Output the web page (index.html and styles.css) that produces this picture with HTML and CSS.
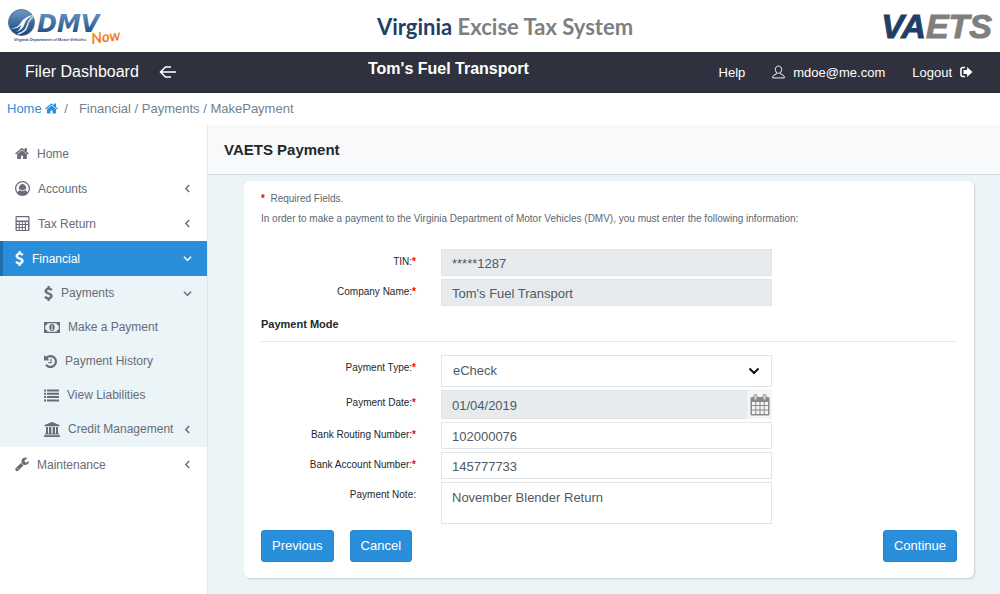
FILE: index.html
```html
<!DOCTYPE html>
<html lang="en">
<head>
    <meta charset="UTF-8">
    <meta name="viewport" content="width=device-width, initial-scale=1.0">
    <title>VAETS Payment</title>
    <link rel="stylesheet" href="styles.css">
</head>
<body>
    <!-- icon shapes, used below with <use> -->
    <svg class="sprite" aria-hidden="true">
        <symbol id="i-home" viewBox="64 64 1664 1664"><path d="M1472 992v480q0 26-19 45t-45 19h-384v-384h-256v384h-384q-26 0-45-19t-19-45v-480q0-1 .5-3t.5-3l575-474 575 474q1 2 1 6zm223-69l-62 74q-8 9-21 11h-3q-13 0-21-7l-692-577-692 577q-12 8-24 7-13-2-21-11l-62-74q-8-10-7-23.5t11-21.5l719-599q32-26 76-26t76 26l244 204v-195q0-14 9-23t23-9h192q14 0 23 9t9 23v408l219 182q10 8 11 21.5t-7 23.5z"/></symbol>
        <symbol id="i-dollar" viewBox="384 0 1024 1792"><path stroke="currentColor" stroke-width="50" d="M1362 1185q0 153-99.5 263.5t-258.5 136.5v175q0 14-9 23t-23 9h-135q-13 0-22.5-9.5t-9.5-22.5v-175q-66-9-127.5-31t-101.5-44.5-74-48-46.5-37.5-17.5-18q-17-21-2-41l103-135q7-10 23-12 15-2 24 9l2 2q113 99 243 125 37 8 74 8 81 0 142.5-43t61.5-122q0-28-15-53t-33.5-42-58.5-37.5-66-32-80-32.5q-39-16-61.5-25t-61.5-26.5-62.5-31-56.5-35.5-53.5-42.5-43.5-49-35.5-58-21-66.5-8.5-78q0-138 98-242t255-134v-180q0-13 9.5-22.5t22.5-9.5h135q14 0 23 9t9 23v176q57 6 110.5 23t87 33.5 63.5 37.5 39 29 15 14q17 18 5 38l-81 146q-8 15-23 16-14 3-27-7-3-3-14.5-12t-39-26.5-58.5-32-74.5-26-85.5-11.5q-95 0-155 43t-60 111q0 26 8.5 48t29.5 41.5 39.5 33 56 31 60.5 27 70 27.5q53 20 81 31.5t76 35 75.5 42.5 62 50 53 63.5 31.5 76.5 13 94z"/></symbol>
        <symbol id="i-history" viewBox="128 128 1536 1536"><path d="M1664 896q0 156-61 298t-164 245-245 164-298 61q-172 0-327-72.5t-264-204.5q-7-10-6.5-22.5t8.5-20.5l137-138q10-9 25-9 16 2 23 12 73 95 179 147t225 52q104 0 198.5-40.5t163.5-109.5 109.5-163.5 40.5-198.5-40.5-198.5-109.5-163.5-163.5-109.5-198.5-40.5q-98 0-188 35.5t-160 101.5l137 138q31 30 14 69-17 40-59 40h-448q-26 0-45-19t-19-45v-448q0-42 40-59 39-17 69 14l130 129q107-101 244.5-156.5t284.5-55.5q156 0 298 61t245 164 164 245 61 298zm-640-288v448q0 14-9 23t-23 9h-320q-14 0-23-9t-9-23v-64q0-14 9-23t23-9h224v-352q0-14 9-23t23-9h64q14 0 23 9t9 23z"/></symbol>
        <symbol id="i-wrench" viewBox="64 128 1664 1664"><path d="M448 1472q0-26-19-45t-45-19-45 19-19 45 19 45 45 19 45-19 19-45zm644-420l-682 682q-37 37-90 37-52 0-91-37l-106-108q-38-36-38-90 0-53 38-91l681-681q39 98 114.5 173.5t173.5 114.5zm634-435q0 39-23 106-47 134-164.5 217.5t-258.5 83.5q-185 0-316.5-131.5t-131.5-316.5 131.5-316.5 316.5-131.5q58 0 121.5 16.5t107.5 46.5q16 11 16 28t-16 28l-293 169v224l193 107q5-3 79-48.5t135.5-81 70.5-35.5q15 0 23.5 10t8.5 25z"/></symbol>
        <symbol id="i-account" viewBox="0 0 14 14"><path fill-rule="evenodd" d="M7 0a7 7 0 1 1 0 14A7 7 0 0 1 7 0zM7 1.200A5.800 5.800 0 0 0 2.500 10.600Q3 8.900 4.600 8.600A3.300 3.300 0 1 1 9.400 8.600Q11 8.900 11.500 10.600A5.800 5.800 0 0 0 7 1.200z"/><path d="M4.500 8.200q2.500 2 5 0" fill="none" stroke="#fff" stroke-width=".8"/></symbol>
        <symbol id="i-calc" viewBox="0 0 14 15"><path fill-rule="evenodd" d="M1 0h12q1 0 1 1v13q0 1-1 1h-12q-1 0-1-1v-13q0-1 1-1zM1.200 1.200v3.200h11.600v-3.200zM1.300 6h2v2h-2zM4.300 6h2v2h-2zM7.300 6h2v2h-2zM10.500 6h2v2h-2zM1.300 9h2v2h-2zM4.300 9h2v2h-2zM7.300 9h2v2h-2zM1.300 12h2v2h-2zM4.300 12h2v2h-2zM7.300 12h2v2h-2zM10.500 9h2v5h-2z"/></symbol>
        <symbol id="i-money" viewBox="0 0 16 11"><path fill-rule="evenodd" d="M0 0h16v11h-16zM3.500 1.200a2.300 2.300 0 0 1-2.300 2.300v4a2.300 2.300 0 0 1 2.300 2.300h9a2.300 2.300 0 0 1 2.300-2.300v-4a2.300 2.300 0 0 1-2.300-2.300z"/><ellipse cx="8" cy="5.500" rx="2.700" ry="3.400"/><path d="M7 4.200l1-.8v4M6.800 7.500h2.400" fill="none" stroke="#ebf4f7" stroke-width=".8"/></symbol>
        <symbol id="i-list" viewBox="0 0 15 12"><path d="M0 0h2v2H0zM3 0h12v2H3zM0 3.300h2v2H0zM3 3.300h12v2H3zM0 6.600h2v2H0zM3 6.600h12v2H3zM0 10h2v2H0zM3 10h12v2H3z"/></symbol>
        <symbol id="i-bank" viewBox="0 0 16 15"><path d="M8 0l7.500 3v1.200H.5V3zM2 5h2v6.500h1V5h2v6.500h2V5h2v6.500h1V5h2v6.500h1v1H1v-1h1zM7.700 5h.6v6.500h-.6zM0 13.200h16V15H0z"/></symbol>
        <symbol id="i-left" viewBox="0 0 8 8"><path d="M5.500 .8L2.500 4l3 3.200" fill="none" stroke="currentColor" stroke-width="1.300"/></symbol>
        <symbol id="i-down" viewBox="0 0 8 8"><path d="M.8 2.500L4 5.500l3.200-3" fill="none" stroke="currentColor" stroke-width="1.300"/></symbol>
        <symbol id="i-collapse" viewBox="0 0 18 14"><path d="M1 7h16M12 2H6.500L1.500 7l5 5H12" fill="none" stroke="currentColor" stroke-width="1.500"/></symbol>
        <symbol id="i-user" viewBox="0 0 14 14"><path d="M7 .6c2 0 3.400 1.500 3.400 3.600S9 8.400 7 8.400 3.600 6.300 3.600 4.200 5 .6 7 .6zM4.700 7.500v1.600L1.500 10.800Q.8 11.500.7 13.400h12.600q-.1-1.900-.8-2.600L9.300 9.100V7.500" fill="none" stroke="currentColor"/></symbol>
        <symbol id="i-logout" viewBox="0 0 13 12"><path d="M5 1.500H3Q1 1.500 1 3.500v5q0 2 2 2h2" fill="none" stroke="currentColor" stroke-width="1.600"/><path d="M7 1l5.500 5L7 11V8H3.500V4H7z"/></symbol>
        <symbol id="i-calendar" viewBox="0 0 20 22"><path fill-rule="evenodd" d="M2 3h16q1.500 0 1.500 1.500v15.500q0 1.500-1.500 1.500h-16q-1.500 0-1.500-1.500v-15.500q0-1.500 1.500-1.500zM2 8v3h3.300v-3zM6.300 8v3h3.200v-3zM10.500 8v3h3.200v-3zM14.700 8v3h3.300v-3zM2 12v3.500h3.300v-3.500zM6.300 12v3.500h3.200v-3.500zM10.500 12v3.500h3.200v-3.500zM14.700 12v3.500h3.300v-3.500zM2 16.500v3.500h3.300v-3.500zM6.300 16.500v3.500h3.200v-3.500zM10.500 16.500v3.500h3.200v-3.500zM14.700 16.500v3.500h3.300v-3.500z"/><rect x="4" y=".5" width="3" height="5.500" rx="1.500" fill="#ddd" stroke="currentColor"/><rect x="13" y=".5" width="3" height="5.500" rx="1.500" fill="#ddd" stroke="currentColor"/></symbol>
    </svg>

    <header class="banner">
        <svg class="dmv-logo" viewBox="0 0 114 40" role="img" aria-label="DMV Now">
            <defs>
                <linearGradient id="blue" x1="0" y1="0" x2="0" y2="1">
                    <stop offset="0" stop-color="#6f9cc8"/>
                    <stop offset="1" stop-color="#123f78"/>
                </linearGradient>
                <linearGradient id="orange" x1="0" y1="0" x2="0" y2="1">
                    <stop offset="0" stop-color="#f9b233"/>
                    <stop offset="1" stop-color="#e5601c"/>
                </linearGradient>
            </defs>
            <circle cx="13.500" cy="16.500" r="13" fill="url(#blue)" stroke="#5b6f8c"/>
            <path d="M2 22q7 1 11-5.500t13-7.500q-8 3-9.500 9T7 26.500q5-2 6.500-8Q9 24 2 22z" fill="#fff"/>
            <path d="M10 28q8-2 9.500-9 1-5 6-8.500" fill="none" stroke="#dfe6ee" stroke-width="1.500"/>
            <text x="29" y="26" class="dmv-name" fill="url(#blue)">DMV</text>
            <text x="6" y="35" class="dmv-tag">Virginia Department of Motor Vehicles</text>
            <text x="84" y="38" class="dmv-now" fill="url(#orange)" transform="rotate(-8 84 38)">Now</text>
        </svg>
        <div class="system-name"><span>Virginia</span> Excise Tax System</div>
        <div class="vaets-logo"><span>VA</span>ETS</div>
    </header>

    <nav class="topbar">
        <div class="topbar-left">
            <a href="#">Filer Dashboard</a>
            <button type="button" class="collapse" aria-label="Collapse menu"><svg><use href="#i-collapse"/></svg></button>
        </div>
        <div class="company">Tom's Fuel Transport</div>
        <div class="topbar-right">
            <a href="#">Help</a>
            <a href="#"><svg class="icon-user"><use href="#i-user"/></svg>mdoe@me.com</a>
            <a href="#">Logout<svg class="icon-logout"><use href="#i-logout"/></svg></a>
        </div>
    </nav>

    <div class="breadcrumb">
        <a href="#">Home <svg><use href="#i-home"/></svg></a>
        <span class="sep">/</span>
        <span>Financial / Payments / MakePayment</span>
    </div>

    <div class="layout">
        <aside class="sidebar">
            <a href="#"><svg class="w14"><use href="#i-home"/></svg>Home</a>
            <a href="#"><svg class="w15"><use href="#i-account"/></svg>Accounts<svg class="arrow"><use href="#i-left"/></svg></a>
            <a href="#"><svg class="w15"><use href="#i-calc"/></svg>Tax Return<svg class="arrow"><use href="#i-left"/></svg></a>
            <a href="#" class="active"><svg class="w9"><use href="#i-dollar"/></svg>Financial<svg class="arrow"><use href="#i-down"/></svg></a>
            <div class="submenu">
                <a href="#"><svg class="w9"><use href="#i-dollar"/></svg>Payments<svg class="arrow"><use href="#i-down"/></svg></a>
                <a href="#"><svg class="w16"><use href="#i-money"/></svg>Make a Payment</a>
                <a href="#"><svg class="w13"><use href="#i-history"/></svg>Payment History</a>
                <a href="#"><svg class="w15"><use href="#i-list"/></svg>View Liabilities</a>
                <a href="#"><svg class="w16"><use href="#i-bank"/></svg>Credit Management<svg class="arrow"><use href="#i-left"/></svg></a>
            </div>
            <a href="#"><svg class="w14"><use href="#i-wrench"/></svg>Maintenance<svg class="arrow"><use href="#i-left"/></svg></a>
        </aside>

        <main class="content">
            <h1>VAETS Payment</h1>
            <form class="card">
                <p><span class="req">*</span>&nbsp; Required Fields.</p>
                <p>In order to make a payment to the Virginia Department of Motor Vehicles (DMV), you must enter the following information:</p>

                <div class="fields">
                    <label for="tin">TIN:<span class="req">*</span></label>
                    <input type="text" id="tin" name="tin" value="*****1287" readonly>
                    <label for="company">Company Name:<span class="req">*</span></label>
                    <input type="text" id="company" name="company" value="Tom's Fuel Transport" readonly>
                </div>

                <h2>Payment Mode</h2>

                <div class="fields">
                    <label for="type">Payment Type:<span class="req">*</span></label>
                    <select id="type" name="type">
                        <option>eCheck</option>
                    </select>
                    <label for="date">Payment Date:<span class="req">*</span></label>
                    <div class="date">
                        <input type="text" id="date" name="date" value="01/04/2019" readonly>
                        <button type="button" aria-label="Pick a date"><svg><use href="#i-calendar"/></svg></button>
                    </div>
                    <label for="routing">Bank Routing Number:<span class="req">*</span></label>
                    <input type="text" id="routing" name="routing" value="102000076">
                    <label for="account">Bank Account Number:<span class="req">*</span></label>
                    <input type="text" id="account" name="account" value="145777733">
                    <label for="note">Payment Note:</label>
                    <textarea id="note" name="note">November Blender Return</textarea>
                </div>

                <div class="buttons">
                    <button type="button">Previous</button>
                    <button type="button">Cancel</button>
                    <button type="submit">Continue</button>
                </div>
            </form>
        </main>
    </div>
</body>
</html>
```
FILE: styles.css
```css
* {
    box-sizing: border-box;
}

body {
    margin: 0;
    min-height: 100vh;
    display: flex;
    flex-direction: column;
    font-family: "Liberation Sans", Arial, sans-serif;
    font-size: 13px;
    color: #23282c;
    background: #fff;
}

a {
    color: inherit;
    text-decoration: none;
}

svg {
    fill: currentColor;
}

.sprite {
    display: none;
}

/* banner */
.banner {
    display: grid;
    grid-template-columns: 1fr auto 1fr;
    align-items: center;
    height: 52px;
    padding: 0 8px;
}

.dmv-logo {
    width: 114px;
    height: 40px;
}

.dmv-name {
    font: italic bold 24px "DejaVu Sans", sans-serif;
}

.dmv-tag {
    font: italic bold 4px "Liberation Sans", sans-serif;
    fill: #1f4a80;
}

.dmv-now {
    font: italic bold 15px Lato, sans-serif;
}

.system-name {
    padding-left: 10px;
    font: bold 22px Lato, sans-serif;
    color: #7f7f7f;
}

.system-name span,
.vaets-logo span {
    color: #1f3f66;
}

.vaets-logo {
    justify-self: end;
    font-size: 34px;
    font-weight: bold;
    font-style: italic;
    color: #7f7f7f;
    -webkit-text-stroke: 1px;
}

/* dark bar */
.topbar {
    display: grid;
    grid-template-columns: minmax(0, 343px) auto 1fr;
    height: 41px;
    padding: 0 27px 0 25px;
    background: #2f323e;
    border-bottom: 1px solid #23282c;
    color: #fff;
}

.topbar-left,
.topbar-right {
    display: flex;
    align-items: center;
}

.topbar-left {
    font-size: 16px;
}

.collapse {
    margin-left: 20px;
    padding: 0;
    border: 0;
    background: none;
    color: #fff;
}

.collapse svg {
    display: block;
    width: 18px;
    height: 14px;
}

.company {
    padding-top: 8px;
    font-size: 16px;
    font-weight: bold;
}

.topbar-right {
    justify-content: flex-end;
    gap: 27px;
}

.topbar-right a {
    display: flex;
    align-items: center;
    gap: 8px;
}

.icon-user {
    width: 13px;
    height: 14px;
}

.icon-logout {
    width: 13px;
    height: 12px;
}

.breadcrumb {
    display: flex;
    gap: 6px;
    height: 32px;
    padding: 0 7px;
    line-height: 32px;
    color: #73818f;
}

.breadcrumb a {
    color: #2b8fda;
}

.breadcrumb .sep {
    margin-right: 5px;
}

.breadcrumb svg {
    width: 13px;
    height: 13px;
    vertical-align: -2px;
}

.layout {
    display: flex;
    flex: 1;
}

/* sidebar */
.sidebar {
    flex: 0 0 207px;
    padding-top: 11px;
    font-size: 12px;
    color: #686c78;
}

.sidebar a {
    display: flex;
    align-items: center;
    gap: 8px;
    height: 35px;
    padding: 0 15px;
}

.sidebar svg {
    height: 15px;
}

.sidebar .arrow {
    width: 9px;
    height: 9px;
    margin-left: auto;
}

.sidebar .active {
    color: #fff;
    background: #2a8fdb;
    border-left: 3px solid #1f6fad;
    padding-left: 12px;
}

.submenu {
    padding-bottom: 1px;
    background: #ebf4f7;
}

.sidebar .submenu a {
    height: 34px;
    padding-left: 44px;
}

.w9 {
    width: 9px;
}

.w13 {
    width: 13px;
}

.w14 {
    width: 14px;
}

.w15 {
    width: 15px;
}

.w16 {
    width: 16px;
}

/* main part */
.content {
    flex: 1;
    border-left: 1px solid #e1e8ec;
    background: #ebf4f7;
}

h1 {
    height: 50px;
    margin: 0;
    padding-left: 16px;
    border-bottom: 1px solid #d3dadf;
    background: #f8f9fb;
    font-size: 15px;
    line-height: 50px;
}

.card {
    margin: 6px 26px 15px 36px;
    padding: 8px 17px 16px;
    border-radius: 6px;
    background: #fff;
    box-shadow: 1px 1px 2px #c5ced4;
}

.card p {
    margin: 0;
    font-size: 10px;
    line-height: 20px;
    color: #5c6873;
}

.req {
    color: #f00;
    font-weight: bold;
}

.fields {
    display: grid;
    grid-template-columns: 155fr 331fr 160fr;
    column-gap: 25px;
    row-gap: 3px;
    margin-top: 20px;
}

.fields label {
    grid-column: 1;
    padding-top: 7px;
    font-size: 10px;
    text-align: right;
}

input,
select,
textarea {
    width: 100%;
    height: 27px;
    padding: 2px 10px 0;
    border: 1px solid #e1e5ea;
    border-radius: 0;
    background: #fff;
    font: 13px "Liberation Sans", Arial, sans-serif;
    color: #4f5a64;
}

input:read-only {
    background: #e7ebee;
}

select {
    height: 32px;
    padding: 0 11px 2px;
    appearance: none;
    background: #fff url("data:image/svg+xml,%3Csvg xmlns='http://www.w3.org/2000/svg' width='12' height='8'%3E%3Cpath d='M1.500 1.500L6 6l4.500-4.500' fill='none' stroke='%23111' stroke-width='2'/%3E%3C/svg%3E") no-repeat right 11px center;
}

textarea {
    display: block;
    height: 42px;
    padding-top: 7px;
    resize: none;
}

.date {
    display: flex;
    height: 29px;
}

.date input {
    flex: 1;
    height: 29px;
}

.date button {
    width: 25px;
    padding: 0 3px;
    border: 0;
    background: #f4f4f4;
    color: #8a8a8a;
}

.date svg {
    display: block;
    width: 20px;
    height: 22px;
}

h2 {
    margin: 9px 0 0;
    padding-bottom: 8px;
    border-bottom: 1px solid #e4e8ea;
    font-size: 11px;
    line-height: 18px;
}

h2 + .fields {
    margin-top: 13px;
}

.buttons {
    display: flex;
    gap: 16px;
    margin-top: 6px;
}

.buttons button {
    height: 32px;
    padding: 0 10px 2px;
    border: 1px solid #2385d0;
    border-radius: 3px;
    background: #2a8fdb;
    color: #fff;
    font: 13px "Liberation Sans", Arial, sans-serif;
}

.buttons button:last-child {
    margin-left: auto;
}
```
